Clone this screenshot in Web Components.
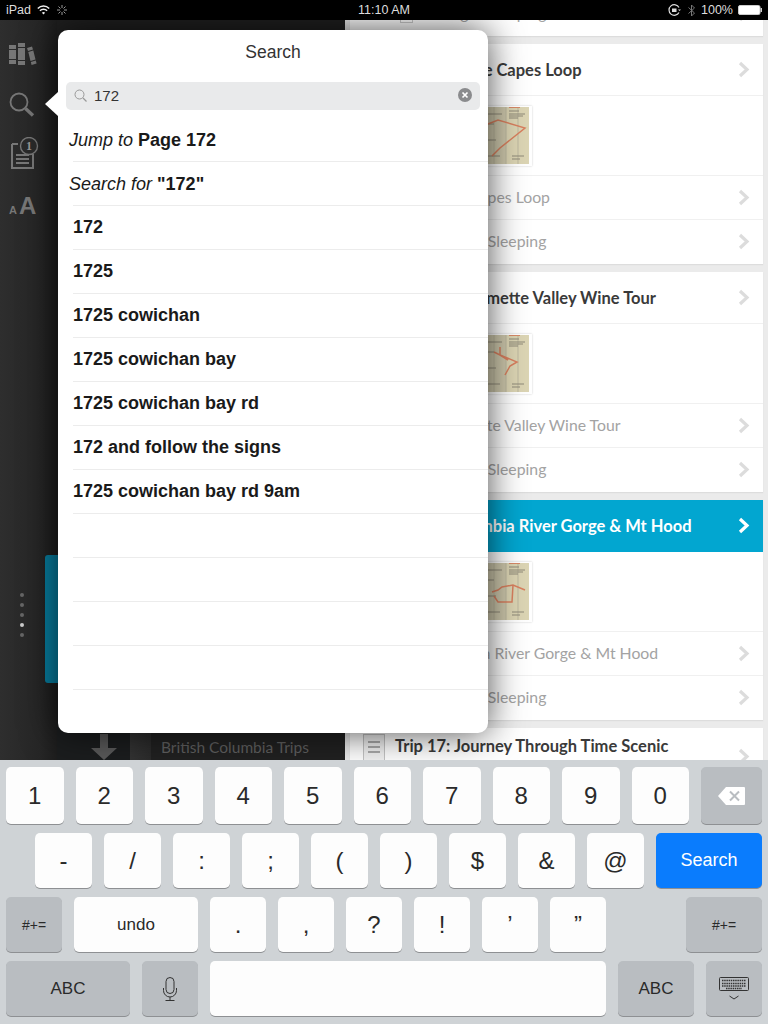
<!DOCTYPE html>
<html lang="en">
<head>
<meta charset="utf-8">
<title>Search</title>
<style>
  html, body { margin: 0; padding: 0; background: #000; }
  body { font-family: "Liberation Sans", Arial, sans-serif; }
</style>
</head>
<body>
<reader-app>
  <status-bar slot="status"></status-bar>
  <side-rail slot="rail"></side-rail>
  <shelf-panel slot="shelf">British Columbia Trips</shelf-panel>
  <trip-list slot="list">
    <trip-card clip>
      <trip-row icon>Eating &amp; Sleeping</trip-row>
    </trip-card>
    <trip-card shift="-4" title="Trip 14: Three Capes Loop" route="M4 18 L14 14 L41 22 L16 42 L8 50">
      <trip-row icon>Three Capes Loop</trip-row>
      <trip-row icon>Eating &amp; Sleeping</trip-row>
    </trip-card>
    <trip-card shift="-6" title="Trip 15: Willamette Valley Wine Tour" route="M10 18 L16 21 L33 28 L26 32 L21 41 M16 13 L16 21 L24 26">
      <trip-row icon>Willamette Valley Wine Tour</trip-row>
      <trip-row icon>Eating &amp; Sleeping</trip-row>
    </trip-card>
    <trip-card shift="-9" active title="Trip 16: Columbia River Gorge &amp; Mt Hood" route="M8 30 L14 28 L18 25 L29 23 L41 28 M29 23 L28 40 L14 40 L10 34">
      <trip-row icon>Columbia River Gorge &amp; Mt Hood</trip-row>
      <trip-row icon>Eating &amp; Sleeping</trip-row>
    </trip-card>
    <trip-card title="Trip 17: Journey Through Time Scenic"></trip-card>
  </trip-list>
  <search-popover slot="popover" value="172">
    <search-row><i>Jump to</i> <b>Page 172</b></search-row>
    <search-row><i>Search for</i> <b>"172"</b></search-row>
    <search-row inset><b>172</b></search-row>
    <search-row inset><b>1725</b></search-row>
    <search-row inset><b>1725 cowichan</b></search-row>
    <search-row inset><b>1725 cowichan bay</b></search-row>
    <search-row inset><b>1725 cowichan bay rd</b></search-row>
    <search-row inset><b>172 and follow the signs</b></search-row>
    <search-row inset><b>1725 cowichan bay rd 9am</b></search-row>
    <search-row></search-row>
    <search-row></search-row>
    <search-row></search-row>
    <search-row></search-row>
  </search-popover>
  <ios-keyboard slot="keyboard">
    <kb-row style="height:57px">
      <kb-key w="57.5" big>1</kb-key><kb-key w="57.5" big>2</kb-key><kb-key w="57.5" big>3</kb-key><kb-key w="57.5" big>4</kb-key><kb-key w="57.5" big>5</kb-key><kb-key w="57.5" big>6</kb-key><kb-key w="57.5" big>7</kb-key><kb-key w="57.5" big>8</kb-key><kb-key w="57.5" big>9</kb-key><kb-key w="57.5" big>0</kb-key>
      <kb-key w="61" dark><svg width="27" height="18" viewBox="0 0 27 18"><path d="M8 0h18a1 1 0 0 1 1 1v16a1 1 0 0 1-1 1H8L0 9z" fill="#fff"/><path d="M12 4.500l9 9M21 4.500l-9 9" stroke="#b9bdc1" stroke-width="2" fill="none"/></svg></kb-key>
    </kb-row>
    <kb-row style="height:55px;padding-left:29px">
      <kb-key w="57" big>-</kb-key><kb-key w="57" big>/</kb-key><kb-key w="57" big>:</kb-key><kb-key w="57" big>;</kb-key><kb-key w="57" big>(</kb-key><kb-key w="57" big>)</kb-key><kb-key w="57" big>$</kb-key><kb-key w="57" big>&amp;</kb-key><kb-key w="57" big>@</kb-key>
      <kb-key w="106" accent>Search</kb-key>
    </kb-row>
    <kb-row style="height:55px">
      <kb-key w="56" dark small>#+=</kb-key><kb-key w="124">undo</kb-key><kb-key w="56" big>.</kb-key><kb-key w="56" big>,</kb-key><kb-key w="56" big>?</kb-key><kb-key w="56" big>!</kb-key><kb-key w="56" big>’</kb-key><kb-key w="56" big>”</kb-key>
      <kb-key w="76" dark small style="margin-left:auto">#+=</kb-key>
    </kb-row>
    <kb-row style="height:55px">
      <kb-key w="124" dark>ABC</kb-key>
      <kb-key w="56" dark><svg width="14" height="24" viewBox="0 0 14 24" fill="none" stroke="#333" stroke-width="1"><rect x="3" y=".5" width="8" height="16" rx="4"/><path d="M.5 11v2.500a6.500 6.500 0 0 0 13 0V11M7 20v3.500M2.500 23.500h9"/></svg></kb-key>
      <kb-key w="396"></kb-key>
      <kb-key w="76" dark>ABC</kb-key>
      <kb-key w="56" dark><svg width="30" height="24" viewBox="0 0 30 24" fill="none" stroke="#333" stroke-width="1"><rect x=".5" y=".5" width="29" height="13" rx="1"/><path d="M3 3.500h24M3 6.500h24M3 9h24M7 11.500h16" stroke-dasharray="1.500 .7" stroke-width="1.500"/><path d="M10.500 19l4.500 3 4.500-3"/></svg></kb-key>
    </kb-row>
  </ios-keyboard>
</reader-app>

<script>
// small helper, every element below is the same shape: html in, open shadow root
function define(name, html, extra = {}) {
  const template = document.createElement("template");
  template.innerHTML = html;
  class Element extends HTMLElement {
    constructor() {
      super();
      this.attachShadow({ mode: "open" }).appendChild(template.content.cloneNode(true));
    }
    connectedCallback() {
      if (extra.connected) extra.connected.call(this, this.shadowRoot);
    }
  }
  customElements.define(name, Element);
}

const SOURCE = `Lato, "Noto Sans", sans-serif`;
const chevron = (color) => `<svg width="12" height="17" viewBox="0 0 12 17"><path d="M2 2l7 6.500L2 15" fill="none" stroke="${color}" stroke-width="3.200"/></svg>`;

define("reader-app", `
  <style>
    :host { display: flex; flex-direction: column; width: 768px; height: 1024px; position: relative; overflow: hidden; }
    .top { position: relative; z-index: 3; }
    main { display: flex; flex: 1; min-height: 0; position: relative; }
    .kb { position: relative; z-index: 3; }
    ::slotted([slot="popover"]) { position: absolute; left: 58px; top: 10px; }
  </style>
  <div class="top"><slot name="status"></slot></div>
  <main>
    <slot name="rail"></slot>
    <slot name="shelf"></slot>
    <slot name="list"></slot>
    <slot name="popover"></slot>
  </main>
  <div class="kb"><slot name="keyboard"></slot></div>
`);

define("status-bar", `
  <style>
    :host { display: grid; grid-template-columns: 1fr auto 1fr; align-items: center; height: 20px; background: #000; color: #ddd; font: 12.500px "Liberation Sans", sans-serif; padding: 0 6px; box-sizing: border-box; }
    div { display: flex; align-items: center; }
    .right { justify-content: flex-end; }
    svg { display: block; }
  </style>
  <div>
    <span>iPad</span>
    <svg style="margin-left:6px" width="13" height="10" viewBox="0 0 13 10" fill="none" stroke="#eee" stroke-width="1.500"><path d="M.8 3.500a8 8 0 0 1 11.400 0M2.900 5.700a5 5 0 0 1 7.200 0"/><path d="M6.500 9.600L4.900 7.800a2.400 2.400 0 0 1 3.200 0z" fill="#eee" stroke="none"/></svg>
    <svg style="margin-left:7px" width="10" height="10" viewBox="0 0 10 10" stroke="#999" stroke-width="1"><path d="M5 0v3M5 7v3M0 5h3M7 5h3M1.500 1.500l2 2M6.500 6.500l2 2M8.500 1.500l-2 2M3.500 6.500l-2 2"/></svg>
  </div>
  <span>11:10 AM</span>
  <div class="right">
    <svg width="13" height="12" viewBox="0 0 13 12" fill="none" stroke="#ddd" stroke-width="1.200"><path d="M11 8.500A5.300 5.300 0 1 1 11 3.500"/><path d="M10 5.500l1.500 1.500 1.500-1.500" fill="#ddd" stroke="none"/><rect x="4" y="4.500" width="4.500" height="3.500" fill="#ddd" stroke="none"/></svg>
    <svg style="margin-left:7px" width="7" height="13" viewBox="0 0 7 13" fill="none" stroke="#777" stroke-width="1"><path d="M.5 3.500l6 5.500L3.500 12V1l3 3-6 5.500"/></svg>
    <span style="margin-left:6px">100%</span>
    <svg style="margin-left:5px" width="24" height="10" viewBox="0 0 24 10"><rect x=".5" y=".5" width="21.500" height="9" rx="1.500" fill="#fff" stroke="#ccc"/><rect x="22.500" y="3" width="1.500" height="4" fill="#ccc"/></svg>
  </div>
`);

define("side-rail", `
  <style>
    :host { display: flex; flex-direction: column; flex: 0 0 57px; background: linear-gradient(90deg, #2e2e2e, #262626 70%, #1d1d1d); position: relative; }
    svg { display: block; flex: none; }
    .books { margin: 23px 0 0 9px; }
    .find { margin: 26px 0 0 9px; }
    .note { margin: 19px 0 0 11px; }
    .aa { margin: 26px 0 0 9px; color: #777; font: bold 24px/20px "Liberation Sans", sans-serif; white-space: nowrap; }
    .aa small { font-size: 11px; margin-right: 2px; }
    .dots { display: flex; flex-direction: column; align-items: center; gap: 6px; width: 8px; margin: 373px 0 0 17.500px; }
    .dots span { width: 4px; height: 4px; border-radius: 50%; background: #666; }
    .dots span.on { background: #ccc; }
  </style>
  <svg class="books" width="28" height="23" viewBox="0 0 28 23" fill="#777"><path d="M0 2h7v4H0zM0 7h7v9H0zM0 17h7v4H0zM9 0h7v4H9zM9 5h7v12H9zM9 18h7v4H9z"/><path d="M18 5l5-1.500 1 3-5 1.500zM19.300 9l5-1.500 2.200 9-5 1.500zM21.800 19l5-1.500.8 3-5 1.500z"/></svg>
  <svg class="find" width="26" height="26" viewBox="0 0 26 26" fill="none" stroke="#777"><circle cx="10" cy="10" r="8.500" stroke-width="1.800"/><path d="M16.500 16.500l7.500 7" stroke-width="3.400"/></svg>
  <svg class="note" width="28" height="33" viewBox="0 0 28 33"><path d="M1 7h6M1 7v24h21v-14" fill="none" stroke="#777" stroke-width="2"/><path d="M5 18h13M5 22h13M5 26h13" stroke="#777" stroke-width="1.800"/><circle cx="18" cy="9" r="8.500" fill="#2a2a2a" stroke="#777" stroke-width="1.400"/><text x="18" y="13" text-anchor="middle" font-family="Liberation Serif, serif" font-weight="700" font-size="12" fill="#999">1</text></svg>
  <div class="aa"><small>A</small>A</div>
  <div class="dots"><span></span><span></span><span></span><span class="on"></span><span></span></div>
`);

define("shelf-panel", `
  <style>
    :host { display: flex; flex-direction: column; justify-content: flex-end; flex: 0 0 288px; background: #1f1f1f; position: relative; }
    .tab { position: absolute; left: -12px; top: 535px; width: 40px; height: 128px; border-radius: 3px; background: #077d9f; }
    .caption { display: flex; height: 60px; background: #3a3a3a; }
    .art { flex: 0 0 94px; background: linear-gradient(90deg, #1b1d1e 78%, #333 78%, #2b2b2b); display: flex; justify-content: center; align-items: flex-end; }
    .label { flex: 1; background: #212121; color: #5f5f5f; font: 15.500px/1 ${SOURCE}; padding-top: 40px; padding-left: 10px; box-sizing: border-box; white-space: nowrap; }
  </style>
  <div class="tab"></div>
  <div class="caption">
    <div class="art"><svg width="26" height="26" viewBox="0 0 26 26"><path d="M9 0h8v14h9L13 26 0 14h9z" fill="#5a5a5a"/></svg></div>
    <div class="label"><slot></slot></div>
  </div>
`);

define("trip-list", `
  <style>
    :host { display: flex; flex-direction: column; gap: 8px; flex: 1; padding: 0 5px; background: #ebebeb; overflow: hidden; height: 100%; box-sizing: border-box; }
  </style>
  <slot></slot>
`);

define("map-thumb", `
  <style>
    :host { display: block; width: 48px; height: 60px; background: #fff; box-shadow: 0 0 2px rgba(0,0,0,.2); }
    svg { display: block; }
  </style>
  <svg width="48" height="60" viewBox="0 0 48 60">
    <rect x="0" y="1" width="45" height="57" fill="#dcd5b4"/>
    <rect x="0" y="1" width="22" height="57" fill="#cfc9ad"/>
    <path d="M10 1v57M22 1v57M34 1v57" stroke="#bdb89f" stroke-width="1"/>
    <path d="M25 5h10M25 8h16M25 10h14M25 12h9M2 8h16M2 18h8M2 34h10M2 50h14M28 50h12M28 53h8" stroke="#8f8a79" stroke-width="1"/>
    <path d="M25 1.500h11" stroke="#d78a68" stroke-width="1"/>
    <path class="route" fill="none" stroke="#d9805f" stroke-width="1.500"/>
  </svg>
`, {
  connected(root) {
    root.querySelector(".route").setAttribute("d", this.getAttribute("route") || "");
  },
});

define("trip-card", `
  <style>
    :host { display: block; flex: none; background: #fff; box-shadow: 0 1px 1px #ddd; }
    :host([clip]) { margin-top: -28px; }
    .head { display: flex; align-items: center; height: 51px; border-bottom: 1px solid #f0f0f0; padding: 0 13px 0 45px; color: #3a3a3a; font: bold 16.500px ${SOURCE}; white-space: nowrap; position: relative; }
    .head span { flex: 1; }
    :host([active]) .head { background: #02a6d0; color: #fff; border-color: #02a6d0; }
    .icon { position: absolute; left: 13px; top: 6px; width: 22px; height: 30px; }
    .pic { height: 69px; border-bottom: 1px solid #f0f0f0; padding: 10px 0 0 134px; box-sizing: content-box; }
    .pic map-thumb { height: 60px; }
    svg { display: block; }
  </style>
  <div class="head"><span class="title"></span><span class="chev" style="flex:none"></span></div>
  <div class="pic"></div>
  <slot></slot>
`, {
  connected(root) {
    const title = this.getAttribute("title");
    const head = root.querySelector(".head");
    const pic = root.querySelector(".pic");
    // the scrolled off card only shows its last row
    if (!title) { head.remove(); pic.remove(); return; }
    const titleEl = root.querySelector(".title");
    titleEl.textContent = title;
    titleEl.style.marginLeft = (this.getAttribute("shift") || 0) + "px";
    this.removeAttribute("title");
    root.querySelector(".chev").innerHTML = chevron(this.hasAttribute("active") ? "#fff" : "#dcdcdc");
    const route = this.getAttribute("route");
    if (route) {
      const thumb = document.createElement("map-thumb");
      thumb.setAttribute("route", route);
      pic.appendChild(thumb);
    } else {
      pic.remove();
      head.insertAdjacentHTML("afterbegin", `<svg class="icon" viewBox="0 0 22 30" fill="none" stroke="#c4c4c4"><rect x=".5" y=".5" width="21" height="29" fill="#f2f2f2"/><path d="M5 8h12M5 13h12M5 18h12" stroke-width="2" stroke="#aaa"/></svg>`);
      head.style.height = "60px";
      head.style.alignItems = "flex-start";
      head.style.paddingTop = "8px";
      head.style.boxSizing = "border-box";
      root.querySelector(".chev").style.paddingTop = "12px";
    }
  },
});

define("trip-row", `
  <style>
    :host { display: flex; align-items: center; height: 43px; border-bottom: 1px solid #f0f0f0; padding: 0 13px 0 75px; color: #a3a3a3; font: 15.800px ${SOURCE}; white-space: nowrap; position: relative; }
    :host(:last-child) { border-bottom: 0; height: 43px; padding-bottom: 1px; }
    span { flex: 1; margin-top: -2px; }
    svg { display: block; }
    .box { position: absolute; left: 50px; top: 8px; width: 13px; height: 23px; border: 1px solid #ccc; box-sizing: border-box; }
  </style>
  <div class="box"></div>
  <span><slot></slot></span>
  ${chevron("#dcdcdc")}
`);

define("search-popover", `
  <style>
    :host { display: block; width: 430px; height: 703px; background: #fff; border-radius: 10px; box-shadow: 0 0 36px rgba(0,0,0,.7); z-index: 2; color: #1a1a1a; }
    .tip { position: absolute; left: -13px; top: 62px; width: 0; height: 0; border: 12px solid transparent; border-left: 0; border-right: 13px solid #fff; }
    h2 { margin: 0; height: 52px; display: flex; align-items: center; justify-content: center; font: normal 17.500px "Liberation Sans", sans-serif; color: #333; box-sizing: border-box; padding-bottom: 7px; }
    .field { display: flex; align-items: center; gap: 7px; height: 28px; margin: 0 8px 8px; padding: 0 8px 2px; background: #e9eaeb; border-radius: 5px; font: 15px "Liberation Sans", sans-serif; color: #333; box-sizing: border-box; }
    .field .value { flex: 1; }
    svg { display: block; flex: none; }
  </style>
  <div class="tip"></div>
  <h2>Search</h2>
  <div class="field">
    <svg width="13" height="13" viewBox="0 0 13 13" fill="none" stroke="#999"><circle cx="5.500" cy="5.500" r="4.500"/><path d="M9 9l3.500 3.500" stroke-width="1.300"/></svg>
    <span class="value"></span>
    <svg width="14" height="14" viewBox="0 0 14 14"><circle cx="7" cy="7" r="7" fill="#8a8b8d"/><path d="M4.500 4.500l5 5M9.500 4.500l-5 5" stroke="#fff" stroke-width="1.700"/></svg>
  </div>
  <slot></slot>
`, {
  connected(root) {
    root.querySelector(".value").textContent = this.getAttribute("value");
  },
});

define("search-row", `
  <style>
    :host { display: flex; align-items: center; height: 43px; margin-left: 15px; border-bottom: 1px solid #ececec; font: 18px "Liberation Sans", sans-serif; color: #1a1a1a; white-space: pre; }
    :host(:not([inset])) .shift { margin: 2px 0 0 -4px; }
  </style>
  <span class="shift"><slot></slot></span>
`);

define("ios-keyboard", `
  <style>
    :host { display: flex; flex-direction: column; gap: 9px; height: 264px; box-sizing: border-box; padding: 7px 6px 0; background: #cfd3d6; }
  </style>
  <slot></slot>
`);

define("kb-row", `
  <style>:host { display: flex; gap: 12px; }</style>
  <slot></slot>
`);

define("kb-key", `
  <style>
    :host { display: flex; align-items: center; justify-content: center; flex: none; box-sizing: border-box; background: #fdfdfd; border-radius: 5px; box-shadow: 0 1px 0 #8e9093; color: #2a2a2a; font: 17px "Liberation Sans", sans-serif; }
    :host([big]) { font-size: 24px; }
    :host([dark]) { background: #b9bdc1; }
    :host([small]) { font-size: 14px; }
    :host([accent]) { background: #0a7cfd; color: #fff; font-size: 18px; }
    ::slotted(svg) { display: block; }
  </style>
  <slot></slot>
`, {
  connected() {
    this.style.width = this.getAttribute("w") + "px";
  },
});
</script>
</body>
</html>
